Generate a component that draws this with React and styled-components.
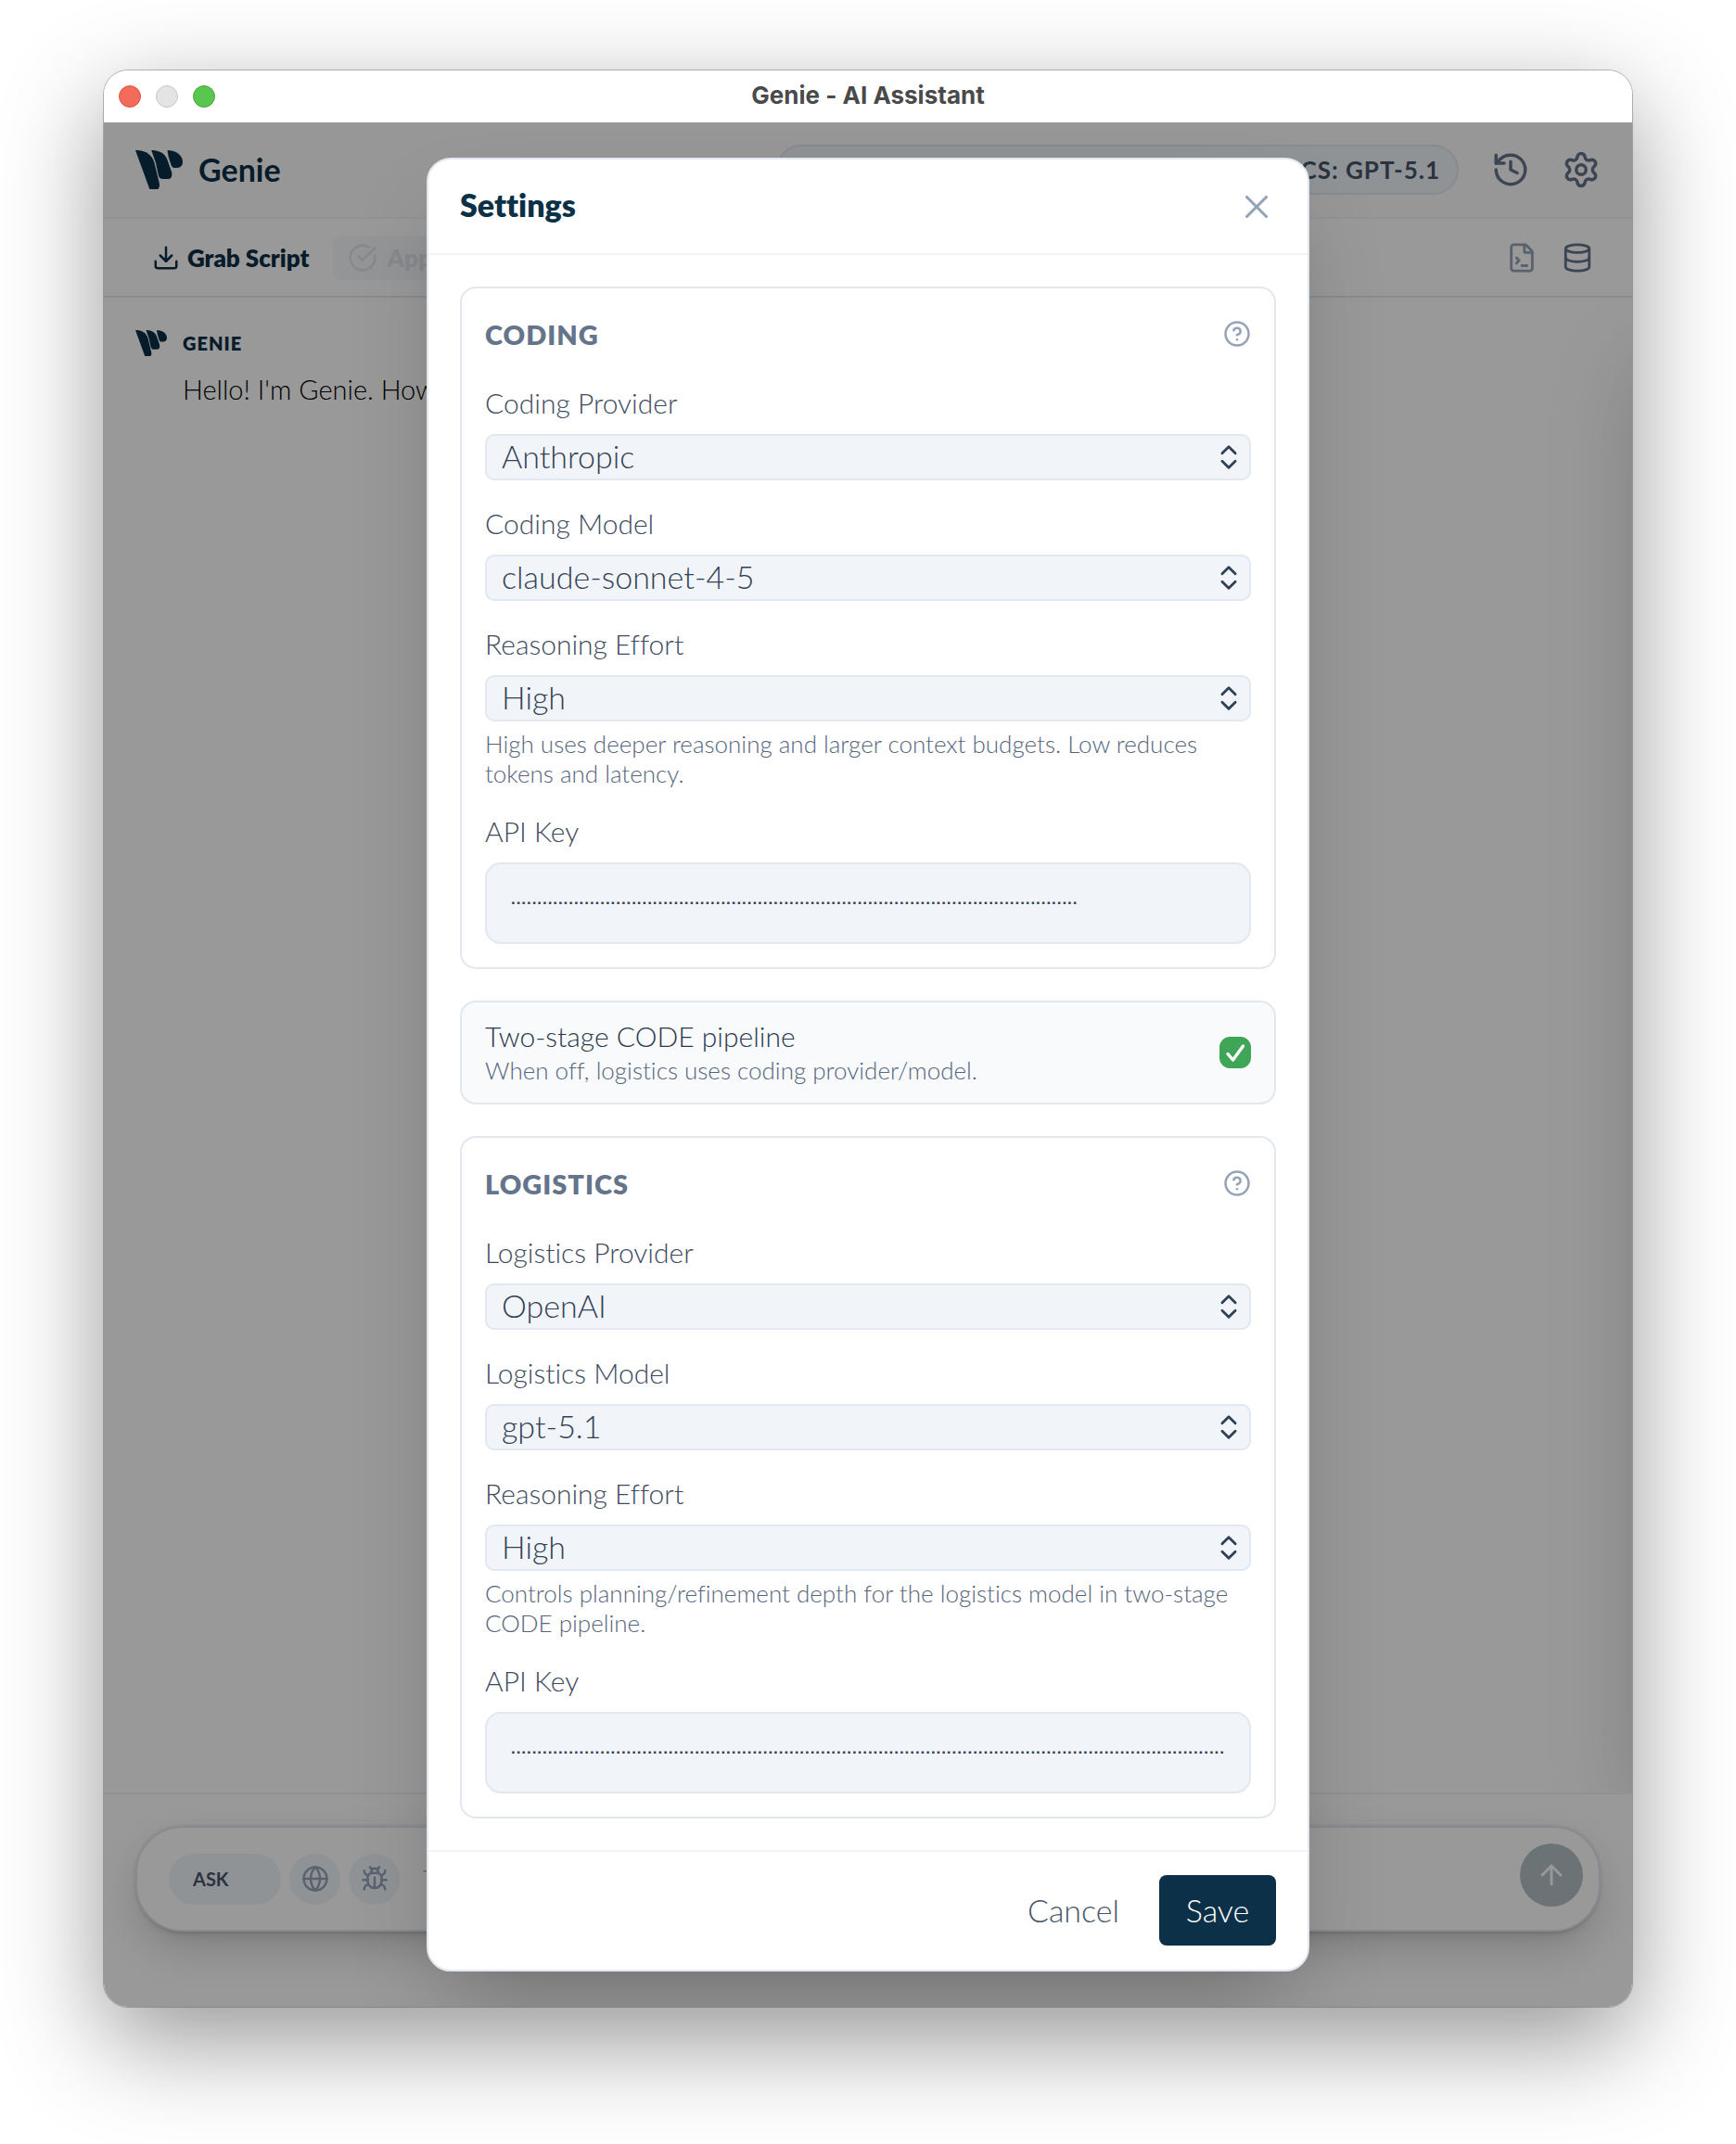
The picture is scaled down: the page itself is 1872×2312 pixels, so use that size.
import { useState } from "react";
import styled, { createGlobalStyle, css } from "styled-components";
import {
    ArrowUp,
    Bug,
    ChevronsUpDown,
    CircleCheckBig,
    CircleQuestionMark,
    Database,
    Download,
    FileTerminal,
    Globe,
    History,
    Settings,
    X,
} from "lucide-react";

const CODING = {
    id: "coding",
    title: "Coding",
    provider: { label: "Coding Provider", value: "Anthropic", options: ["Anthropic", "OpenAI"] },
    model: { label: "Coding Model", value: "claude-sonnet-4-5", options: ["claude-sonnet-4-5", "gpt-5.1"] },
    hint: "High uses deeper reasoning and larger context budgets. Low reduces tokens and latency.",
    apiKey: "·".repeat(108),
};

const LOGISTICS = {
    id: "logistics",
    title: "Logistics",
    provider: { label: "Logistics Provider", value: "OpenAI", options: ["Anthropic", "OpenAI"] },
    model: { label: "Logistics Model", value: "gpt-5.1", options: ["claude-sonnet-4-5", "gpt-5.1"] },
    hint: "Controls planning/refinement depth for the logistics model in two-stage CODE pipeline.",
    apiKey: "·".repeat(164),
};

export default function App() {
    return (
        <>
            <GlobalStyle />
            <Desktop>
                <Window>
                    <TitleBar>
                        <Lights>
                            <Light $color="#f26b5b" $edge="#dc5646" />
                            <Light $color="#e4e4e4" $edge="#c6c6c6" />
                            <Light $color="#58c64f" $edge="#45ab3c" />
                        </Lights>
                        <WindowTitle>Genie - AI Assistant</WindowTitle>
                    </TitleBar>
                    <Content>
                        <Header />
                        <Toolbar />
                        <Messages />
                        <Composer />
                        <Overlay>
                            <SettingsModal />
                        </Overlay>
                    </Content>
                </Window>
            </Desktop>
        </>
    );
}

function Logo({ width }) {
    return (
        <svg width={width} viewBox="0 0 151 126" fill="#0c3048" aria-hidden="true">
            <path d="M0 0H8C34 2 52 14 60 38L76 104Q80 126 66 126H46Z" />
            <path d="M51 0H58C82 2 98 14 104 36L116 70Q120 92 103 92H86C78 92 75 86 73 78L65 40Z" />
            <path d="M102 0C131 0 151 18 151 37C151 49 144 56 133 56H123C117 56 115 50 113 44L106 22Z" />
        </svg>
    );
}

function Tick() {
    return (
        <svg width="34" height="34" viewBox="0 0 34 34" fill="none" stroke="#fff" strokeWidth="3.4" strokeLinecap="round" strokeLinejoin="round" aria-hidden="true">
            <path d="M9 18.5L14.5 25L25.5 10" />
        </svg>
    );
}

function Header() {
    return (
        <HeaderBar>
            <Brand>
                <Logo width={51} />
                Genie
            </Brand>
            <ModelPill>CODING: CLAUDE-SONNET-4-5 | LOGISTICS: GPT-5.1</ModelPill>
            <IconButton aria-label="History">
                <History size={42} />
            </IconButton>
            <IconButton aria-label="Settings">
                <Settings size={42} />
            </IconButton>
        </HeaderBar>
    );
}

function Toolbar() {
    return (
        <ToolbarRow>
            <ToolButton>
                <Download size={30} />
                Grab Script
            </ToolButton>
            <ToolButton $muted disabled>
                <CircleCheckBig size={32} />
                Apply
            </ToolButton>
            <ToolbarIcons>
                <IconButton $light $gap={13} aria-label="Script">
                    <FileTerminal size={34} />
                </IconButton>
                <IconButton $gap={13} aria-label="Database">
                    <Database size={34} />
                </IconButton>
            </ToolbarIcons>
        </ToolbarRow>
    );
}

function Messages() {
    return (
        <MessageList>
            <Message>
                <Logo width={34} />
                <Author>GENIE</Author>
                <MessageText>Hello! I'm Genie. How</MessageText>
            </Message>
            <Drawer />
        </MessageList>
    );
}

function Composer() {
    return (
        <ComposerPanel>
            <ComposerBox>
                <ModeButton>ASK</ModeButton>
                <RoundButton aria-label="Web search">
                    <Globe size={30} />
                </RoundButton>
                <RoundButton aria-label="Debug">
                    <Bug size={30} />
                </RoundButton>
                <Prompt aria-label="Message" placeholder="Type a message..." />
                <SendButton aria-label="Send">
                    <ArrowUp size={34} />
                </SendButton>
            </ComposerBox>
        </ComposerPanel>
    );
}

function SettingsModal() {
    const [twoStage, setTwoStage] = useState(true);

    return (
        <Modal role="dialog" aria-labelledby="settings-title">
            <ModalHeader>
                <ModalTitle id="settings-title">Settings</ModalTitle>
                <CloseButton aria-label="Close">
                    <X size={42} strokeWidth={1.8} />
                </CloseButton>
            </ModalHeader>
            <ModalBody>
                <ProviderSection data={CODING} />
                <PipelineCard>
                    <PipelineLabel htmlFor="two-stage">
                        Two-stage CODE pipeline
                        <Hint as="span">When off, logistics uses coding provider/model.</Hint>
                    </PipelineLabel>
                    <CheckWrap>
                        <Checkbox
                            id="two-stage"
                            type="checkbox"
                            checked={twoStage}
                            onChange={(e) => setTwoStage(e.target.checked)}
                        />
                        {twoStage && <Tick />}
                    </CheckWrap>
                </PipelineCard>
                <ProviderSection data={LOGISTICS} />
            </ModalBody>
            <ModalFooter>
                <CancelButton>Cancel</CancelButton>
                <SaveButton>Save</SaveButton>
            </ModalFooter>
        </Modal>
    );
}

function ProviderSection({ data }) {
    return (
        <Section>
            <SectionHeader>
                <SectionTitle>{data.title}</SectionTitle>
                <HelpButton aria-label={`${data.title} help`}>
                    <CircleQuestionMark size={30} />
                </HelpButton>
            </SectionHeader>
            <SelectField id={`${data.id}-provider`} {...data.provider} />
            <SelectField id={`${data.id}-model`} {...data.model} />
            <div>
                <SelectField
                    id={`${data.id}-effort`}
                    label="Reasoning Effort"
                    value="High"
                    options={["High", "Medium", "Low"]}
                />
                <FieldHint>{data.hint}</FieldHint>
            </div>
            <Field>
                <Label htmlFor={`${data.id}-key`}>API Key</Label>
                <KeyInput id={`${data.id}-key`} defaultValue={data.apiKey} />
            </Field>
        </Section>
    );
}

function SelectField({ id, label, value, options }) {
    return (
        <Field>
            <Label htmlFor={id}>{label}</Label>
            <SelectWrap>
                <Select id={id} defaultValue={value}>
                    {options.map((option) => (
                        <option key={option}>{option}</option>
                    ))}
                </Select>
                <ChevronsUpDown size={34} />
            </SelectWrap>
        </Field>
    );
}

const GlobalStyle = createGlobalStyle`
    * {
        box-sizing: border-box;
    }
    body {
        margin: 0;
        background: #fff;
        font-family: Lato, "Liberation Sans", sans-serif;
        font-weight: 300;
        font-variant-ligatures: none;
    }
    button, input, select {
        font: inherit;
        color: inherit;
    }
    button {
        display: flex;
        align-items: center;
        justify-content: center;
        padding: 0;
        border: 0;
        background: none;
        cursor: pointer;
    }
    svg {
        display: block;
        flex-shrink: 0;
    }
`;

const Desktop = styled.div`
    display: flex;
    min-height: 100vh;
    padding: 76px 112px 148px;
`;

const Window = styled.div`
    flex: 1;
    min-width: 0;
    display: flex;
    flex-direction: column;
    border-radius: 26px;
    overflow: hidden;
    box-shadow: 0 0 0 1px rgba(0, 0, 0, 0.25), 0 36px 110px rgba(0, 0, 0, 0.42);
`;

const TitleBar = styled.div`
    display: grid;
    grid-template-columns: 1fr auto 1fr;
    align-items: center;
    height: 56px;
    padding: 0 16px;
    background: #fff;
`;

const Lights = styled.div`
    display: flex;
    gap: 16px;
`;

const Light = styled.span`
    width: 24px;
    height: 24px;
    border-radius: 50%;
    border: 1px solid ${(props) => props.$edge};
    background: ${(props) => props.$color};
`;

const WindowTitle = styled.div`
    padding-bottom: 3px;
    font-family: Inter, sans-serif;
    font-size: 26px;
    font-weight: 700;
    color: #4a4a4a;
`;

const Content = styled.div`
    position: relative;
    flex: 1;
    display: flex;
    flex-direction: column;
    background: #fff;
`;

const HeaderBar = styled.header`
    display: flex;
    align-items: center;
    height: 104px;
    padding: 0 34px;
    border-bottom: 2px solid #f1f5f9;
    background: #fcfcfc;
`;

const Brand = styled.div`
    display: flex;
    align-items: center;
    gap: 17px;
    margin-right: auto;
    font-size: 34px;
    line-height: 40px;
    font-weight: 700;
    color: #0c3048;
`;

const ModelPill = styled.div`
    display: flex;
    justify-content: flex-end;
    align-items: center;
    min-width: 736px;
    height: 54px;
    padding: 0 18px;
    margin-right: 18px;
    border: 2px solid #e2e8f0;
    border-radius: 27px;
    background: #f1f5f9;
    font-size: 26px;
    font-weight: 700;
    letter-spacing: 1px;
    color: #475569;
    white-space: nowrap;
`;

const IconButton = styled.button`
    padding: 0 ${(props) => props.$gap || 17}px;
    color: ${(props) => (props.$light ? "#94a3b8" : "#64748b")};

    &:last-child {
        padding-right: 0;
    }
`;

const ToolbarRow = styled.div`
    display: flex;
    align-items: center;
    gap: 26px;
    height: 85px;
    padding: 0 42px 0 52px;
    border-bottom: 2px solid #e2e8f0;
`;

const ToolButton = styled.button`
    gap: 8px;
    height: 48px;
    font-size: 26px;
    font-weight: 800;
    color: #0c3048;

    ${(props) =>
        props.$muted &&
        css`
            gap: 10px;
            padding: 0 16px;
            border-radius: 8px;
            background: #f1f5f9;
            color: #cbd5e1;
            opacity: 0.6;
        `}
`;

const ToolbarIcons = styled.div`
    display: flex;
    margin-left: auto;
`;

const MessageList = styled.main`
    position: relative;
    flex: 1;
    padding: 33px 34px;
    overflow: hidden;
`;

const Message = styled.article`
    display: grid;
    grid-template-columns: 34px 1fr;
    column-gap: 17px;
    row-gap: 14px;
    align-items: center;
    color: #000;
`;

const Author = styled.div`
    font-size: 20px;
    line-height: 32px;
    font-weight: 800;
    letter-spacing: 1px;
    color: #0c3048;
`;

const MessageText = styled.p`
    grid-column: 2;
    margin: 0;
    font-size: 29px;
    line-height: 40px;
`;

// closed history drawer, only its shadow falls on the messages
const Drawer = styled.aside`
    position: absolute;
    left: 100%;
    top: 0;
    bottom: 0;
    width: 600px;
    box-shadow: 0 50px 100px -24px rgba(0, 0, 0, 0.25);
`;

const ComposerPanel = styled.footer`
    padding: 34px 34px 81px;
    border-top: 2px solid #f1f5f9;
`;

const ComposerBox = styled.div`
    display: flex;
    align-items: center;
    height: 114px;
    padding: 0 17px 0 34px;
    border: 2px solid #e2e8f0;
    border-radius: 51px;
    background: #fff;
    box-shadow: 0 0 0 2px rgba(0, 0, 0, 0.04), 0 20px 50px -6px rgba(0, 0, 0, 0.2), 0 8px 12px -8px rgba(0, 0, 0, 0.2);
`;

const ModeButton = styled.button`
    justify-content: flex-start;
    width: 121px;
    height: 55px;
    padding-left: 26px;
    border-radius: 28px;
    background: #f1f5f9;
    font-size: 20px;
    font-weight: 700;
    color: #475569;
`;

const RoundButton = styled.button`
    width: 55px;
    height: 55px;
    margin-left: 9px;
    border-radius: 50%;
    background: #f1f5f9;
    color: #94a3b8;
`;

const Prompt = styled.input`
    flex: 1;
    min-width: 0;
    margin: 0 25px;
    padding: 0;
    border: 0;
    background: none;
    font-size: 30px;
    outline: none;

    &::placeholder {
        color: #94a3b8;
    }
`;

const SendButton = styled.button`
    align-self: flex-start;
    width: 68px;
    height: 68px;
    margin-top: 17px;
    border-radius: 50%;
    background: #b3c0c5;
    color: #fff;
`;

const Overlay = styled.div`
    position: absolute;
    inset: 0;
    display: flex;
    align-items: center;
    justify-content: center;
    padding: 34px;
    background: rgba(0, 0, 0, 0.4);
`;

const Modal = styled.section`
    width: 100%;
    max-width: 952px;
    border: 2px solid #e2e8f0;
    border-radius: 26px;
    background: #fff;
    box-shadow: 0 50px 100px -24px rgba(0, 0, 0, 0.25);
`;

const ModalHeader = styled.div`
    display: flex;
    align-items: center;
    justify-content: space-between;
    height: 103px;
    padding: 0 34px;
    border-bottom: 2px solid #f1f5f9;
`;

const ModalTitle = styled.h2`
    margin: 0;
    padding-bottom: 4px;
    font-size: 34px;
    font-weight: 800;
    color: #0c3048;
`;

const CloseButton = styled.button`
    color: #94a3b8;
`;

const ModalBody = styled.div`
    display: flex;
    flex-direction: column;
    gap: 34px;
    padding: 34px;
`;

const Section = styled.div`
    display: flex;
    flex-direction: column;
    gap: 29px;
    padding: 25px;
    border: 2px solid #e2e8f0;
    border-radius: 17px;
`;

const SectionHeader = styled.div`
    display: flex;
    align-items: center;
    justify-content: space-between;
    height: 52px;
    padding-bottom: 4px;
`;

const SectionTitle = styled.h3`
    margin: 0;
    font-size: 29px;
    font-weight: 800;
    letter-spacing: 1px;
    text-transform: uppercase;
    color: #64748b;
`;

const HelpButton = styled.button`
    color: #94a3b8;
`;

const Field = styled.div`
    display: flex;
    flex-direction: column;
    gap: 17px;
`;

const Label = styled.label`
    font-size: 30px;
    line-height: 34px;
    color: #3d4a5e;
`;

const SelectWrap = styled.div`
    display: grid;
    align-items: center;

    > * {
        grid-area: 1 / 1;
    }

    svg {
        justify-self: end;
        margin-right: 7px;
        color: #334155;
        pointer-events: none;
    }
`;

const Select = styled.select`
    appearance: none;
    width: 100%;
    height: 50px;
    padding: 0 50px 3px 16px;
    border: 2px solid #e2e8f0;
    border-radius: 10px;
    background: #f1f5f9;
    font-size: 34px;
    line-height: 40px;
    color: #334155;
`;

const Hint = styled.p`
    margin: 0;
    font-size: 26px;
    line-height: 32px;
    color: #56657c;
`;

const FieldHint = styled(Hint)`
    margin-top: 8px;
`;

const KeyInput = styled.input`
    width: 100%;
    height: 88px;
    padding: 0 26px;
    border: 2px solid #e2e8f0;
    border-radius: 17px;
    background: #f1f5f9;
    font-family: "Liberation Sans", sans-serif;
    font-size: 17px;
    font-weight: 700;
    color: #334155;
`;

const PipelineCard = styled.div`
    display: flex;
    align-items: center;
    justify-content: space-between;
    height: 112px;
    padding: 0 25px;
    border: 2px solid #e2e8f0;
    border-radius: 17px;
    background: #f8fafc;
`;

const PipelineLabel = styled.label`
    display: flex;
    flex-direction: column;
    gap: 2px;
    padding-bottom: 2px;
    font-size: 30px;
    line-height: 38px;
    color: #2b384b;
`;

const CheckWrap = styled.div`
    display: grid;

    > * {
        grid-area: 1 / 1;
    }

    svg {
        pointer-events: none;
    }
`;

const Checkbox = styled.input`
    appearance: none;
    width: 34px;
    height: 34px;
    margin: 0;
    border: 1px solid #cbd5e1;
    border-radius: 11px;
    background: #fff;

    &:checked {
        border-color: #3fa557;
        background: #3fa557;
    }
`;

const ModalFooter = styled.div`
    display: flex;
    justify-content: flex-end;
    gap: 17px;
    padding: 25px 34px 26px;
    border-top: 2px solid #f1f5f9;
`;

const CancelButton = styled.button`
    height: 76px;
    padding: 0 26px 2px;
    border-radius: 8px;
    font-size: 34px;
    color: #475569;
`;

const SaveButton = styled(CancelButton)`
    min-width: 126px;
    background: #0c3048;
    color: #fff;
`;
